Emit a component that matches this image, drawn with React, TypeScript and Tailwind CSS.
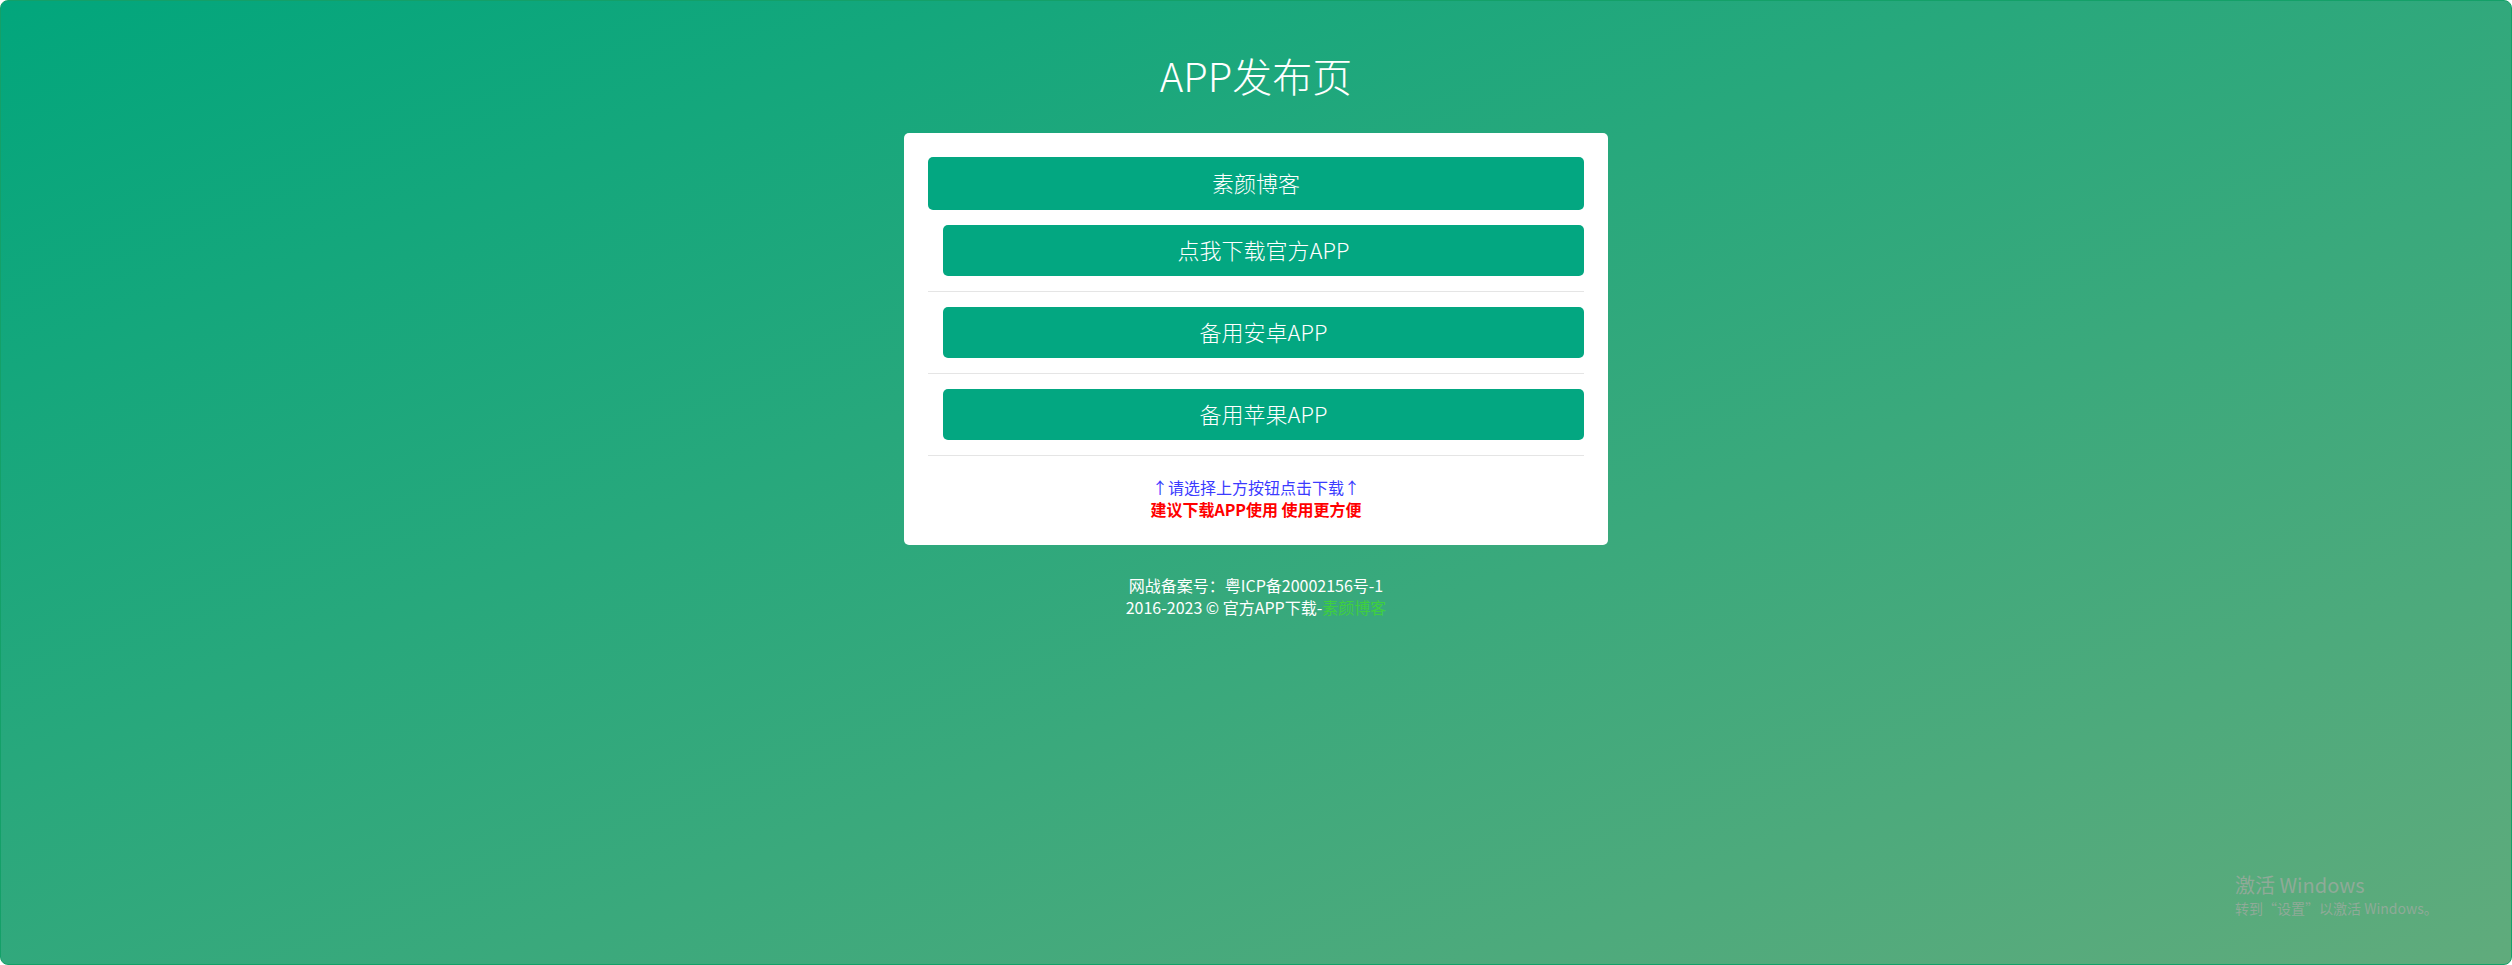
import React from "react";

const cjk = { fontFamily: '"Noto Sans CJK SC", "Noto Sans", sans-serif' };

function DlButton({ label }: { label: string }) {
  return (
    <div className="ml-[15px] mt-[15px] flex h-[51px] items-center justify-center rounded-[5px] bg-[#03a781] pb-[2px] text-[22px] font-light text-white">
      {label}
    </div>
  );
}

function Divider() {
  return <div className="mt-[15px] h-px bg-[#e5e5e5]" />;
}

export default function App() {
  return (
    <div
      className="relative h-[965px] w-full overflow-hidden rounded-[8px] border border-[#14a068] bg-[linear-gradient(to_bottom_right,#02a67c,#60ab7c)]"
      style={cjk}
    >
      <h1 className="mt-[52px] text-center text-[40px] font-light leading-[44px] text-white">
        APP发布页
      </h1>

      <div className="mx-auto mt-[36px] w-[704px] rounded-[5px] bg-white px-6 pb-[25px] pt-6">
        <div className="flex h-[53px] items-center justify-center rounded-[5px] bg-[#03a781] pb-[2px] text-[22px] font-light text-white">
          素颜博客
        </div>
        <DlButton label="点我下载官方APP" />
        <Divider />
        <DlButton label="备用安卓APP" />
        <Divider />
        <DlButton label="备用苹果APP" />
        <Divider />
        <div className="pt-[20px] text-center text-[16px] leading-[22px]">
          <div className="text-[#3b3bff]">↑请选择上方按钮点击下载↑</div>
          <div className="font-bold text-[#ff0000]">建议下载APP使用 使用更方便</div>
        </div>
      </div>

      <div className="mt-[29px] text-center text-[16px] leading-[22px] text-white">
        <div>网战备案号：粤ICP备20002156号-1</div>
        <div>
          2016-2023 © 官方APP下载-<span className="text-[#3fcf3f]">素颜博客</span>
        </div>
      </div>

      <div className="absolute left-[2234px] top-[871px] text-[#8faa98]">
        <div className="text-[20px] leading-[26px]">激活 Windows</div>
        <div className="text-[14px] leading-[20px]">转到“设置”以激活 Windows。</div>
      </div>
    </div>
  );
}
